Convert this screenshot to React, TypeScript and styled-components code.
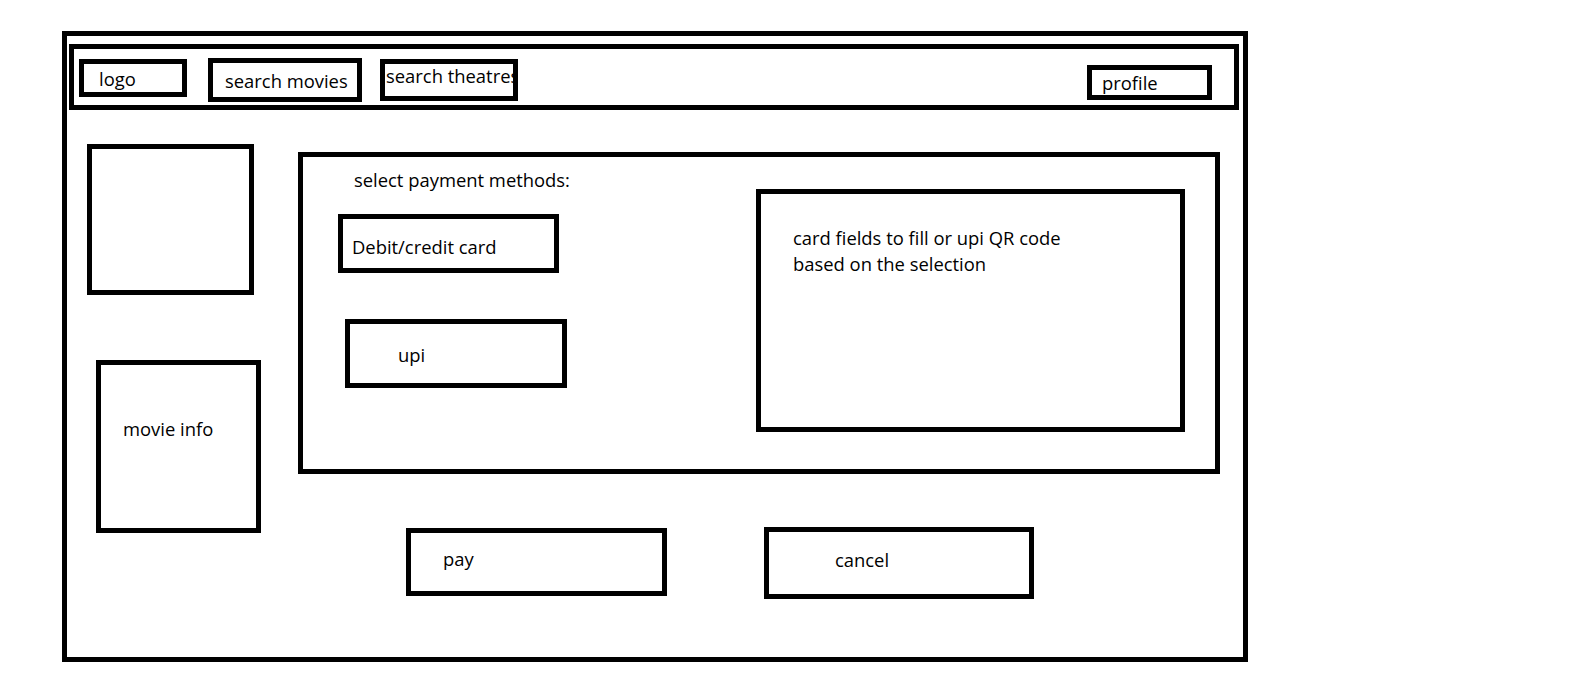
import React from "react";
import styled, { createGlobalStyle, css } from "styled-components";

const GlobalStyle = createGlobalStyle`
  html, body { margin: 0; padding: 0; background: #ffffff; }
  body {
    font-family: "Open Sans", "Noto Sans", sans-serif;
    font-size: 18.4px;
    color: #000000;
  }
  * { box-sizing: border-box; }
`;

type Geo = {
  $w: number;
  $h: number;
  $mt?: number;
  $ml?: number;
  $pl?: number;
  $pt?: number;
  $lh?: number;
  $push?: boolean;
};

const geo = css<Geo>`
  flex: none;
  width: ${(p) => p.$w}px;
  height: ${(p) => p.$h}px;
  margin-top: ${(p) => p.$mt ?? 0}px;
  margin-left: ${(p) => (p.$push ? "auto" : `${p.$ml ?? 0}px`)};
  padding: ${(p) => p.$pt ?? 0}px 0 0 ${(p) => p.$pl ?? 0}px;
  border: 5px solid #000;
  line-height: ${(p) => p.$lh ?? 25}px;
  white-space: nowrap;
  overflow: hidden;
`;

const Page = styled.div`
  padding: 31px 0 0 62px;
`;

const Frame = styled.div`
  width: 1186px;
  height: 631px;
  border: 5px solid #000;
  display: flex;
  flex-direction: column;
`;

const Header = styled.header`
  margin: 8px 4px 0 2px;
  height: 66px;
  border: 5px solid #000;
  display: flex;
  align-items: flex-start;
  padding: 0 22px 0 5px;
`;

const NavItem = styled.div<Geo>`
  ${geo}
`;

const Body = styled.div`
  display: flex;
  align-items: flex-start;
`;

const Sidebar = styled.aside`
  flex: none;
  width: 194px;
  display: flex;
  flex-direction: column;
  align-items: flex-start;
`;

const Poster = styled.div<Geo>`
  ${geo}
`;

const InfoCard = styled.div<Geo>`
  ${geo}
`;

const Main = styled.main`
  flex: none;
  width: 922px;
  margin: 42px 0 0 37px;
  display: flex;
  flex-direction: column;
`;

const Panel = styled.section`
  height: 322px;
  border: 5px solid #000;
  display: flex;
  align-items: flex-start;
`;

const Methods = styled.div`
  flex: none;
  width: 453px;
  display: flex;
  flex-direction: column;
  align-items: flex-start;
`;

const Title = styled.div`
  margin: 10px 0 1px 51px;
  line-height: 25px;
  white-space: nowrap;
`;

const MethodOption = styled.div<Geo>`
  ${geo}
`;

const Details = styled.div`
  flex: none;
  margin-top: 32px;
  width: 429px;
  height: 243px;
  border: 5px solid #000;
  padding: 31px 0 0 32px;
  line-height: 25.7px;
`;

const Actions = styled.div`
  display: flex;
  align-items: flex-start;
`;

const ActionButton = styled.div<Geo>`
  ${geo}
`;

export default function App() {
  return (
    <>
      <GlobalStyle />
      <Page>
        <Frame>
          <Header>
            <NavItem $w={108} $h={38} $mt={10} $pl={15} $pt={2}>
              logo
            </NavItem>
            <NavItem $w={154} $h={44} $mt={9} $ml={21} $pl={12} $pt={5}>
              search movies
            </NavItem>
            <NavItem $w={138} $h={42} $mt={10} $ml={18} $pl={1} $pt={0} $lh={23}>
              search theatres
            </NavItem>
            <NavItem $w={125} $h={35} $mt={16} $push $pl={10} $pt={0}>
              profile
            </NavItem>
          </Header>
          <Body>
            <Sidebar>
              <Poster $w={167} $h={151} $mt={34} $ml={20} />
              <InfoCard $w={165} $h={173} $mt={65} $ml={29} $pl={22} $pt={51}>
                movie info
              </InfoCard>
            </Sidebar>
            <Main>
              <Panel>
                <Methods>
                  <Title>select payment methods:</Title>
                  <MethodOption $w={221} $h={59} $mt={21} $ml={35} $pl={9} $pt={15}>
                    Debit/credit card
                  </MethodOption>
                  <MethodOption $w={222} $h={69} $mt={46} $ml={42} $pl={48} $pt={18}>
                    upi
                  </MethodOption>
                </Methods>
                <Details>
                  card fields to fill or upi QR code
                  <br />
                  based on the selection
                </Details>
              </Panel>
              <Actions>
                <ActionButton $w={261} $h={68} $mt={54} $ml={108} $pl={32} $pt={13}>
                  pay
                </ActionButton>
                <ActionButton $w={270} $h={72} $mt={53} $ml={97} $pl={66} $pt={15}>
                  cancel
                </ActionButton>
              </Actions>
            </Main>
          </Body>
        </Frame>
      </Page>
    </>
  );
}
